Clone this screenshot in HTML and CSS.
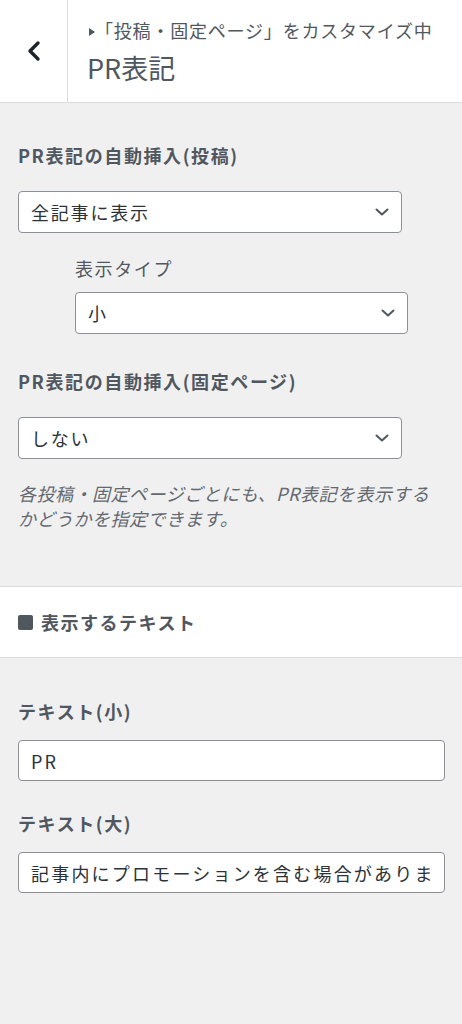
FILE: index.html
```html
<!DOCTYPE html>
<html lang="ja">

<head>
    <meta charset="UTF-8">
    <meta name="viewport" content="width=device-width, initial-scale=1.0">
    <title>PR表記</title>
    <link rel="stylesheet" href="styles.css">
</head>

<body>
    <div class="header">
        <button class="back" aria-label="戻る">
            <svg width="16" height="22" viewBox="0 0 16 22">
                <path d="M12 3 L4 11 L12 19" fill="none" stroke="#1d2327" stroke-width="3.4" stroke-linecap="round" stroke-linejoin="round" />
            </svg>
        </button>
        <div class="heading">
            <div class="crumb"><span class="arrow"></span>「投稿・固定ページ」をカスタマイズ中</div>
            <div class="title">PR表記</div>
        </div>
    </div>

    <div class="panel">
        <div class="control">
            <div class="label">PR表記の自動挿入(投稿)</div>
            <div class="select-wrap">
                <select>
                    <option>全記事に表示</option>
                </select>
                <svg class="chev" width="14" height="8" viewBox="0 0 14 8">
                    <path d="M1.5 1.5 L7 6.5 L12.5 1.5" fill="none" stroke="#50575e" stroke-width="2" stroke-linecap="round" stroke-linejoin="round" />
                </svg>
            </div>
        </div>

        <div class="control sub">
            <div class="label light">表示タイプ</div>
            <div class="select-wrap">
                <select>
                    <option>小</option>
                </select>
                <svg class="chev" width="14" height="8" viewBox="0 0 14 8">
                    <path d="M1.5 1.5 L7 6.5 L12.5 1.5" fill="none" stroke="#50575e" stroke-width="2" stroke-linecap="round" stroke-linejoin="round" />
                </svg>
            </div>
        </div>

        <div class="control second">
            <div class="label">PR表記の自動挿入(固定ページ)</div>
            <div class="select-wrap">
                <select>
                    <option>しない</option>
                </select>
                <svg class="chev" width="14" height="8" viewBox="0 0 14 8">
                    <path d="M1.5 1.5 L7 6.5 L12.5 1.5" fill="none" stroke="#50575e" stroke-width="2" stroke-linecap="round" stroke-linejoin="round" />
                </svg>
            </div>
            <p class="desc">各投稿・固定ページごとにも、PR表記を表示するかどうかを指定できます。</p>
        </div>
    </div>

    <div class="section">
        <span class="square"></span>表示するテキスト
    </div>

    <div class="panel texts">
        <div class="control">
            <div class="label">テキスト(小)</div>
            <div class="field">
                <div class="clip"><input type="text" value="PR"></div>
            </div>
        </div>
        <div class="control">
            <div class="label">テキスト(大)</div>
            <div class="field">
                <div class="clip"><input type="text" value="記事内にプロモーションを含む場合があります。"></div>
            </div>
        </div>
    </div>
</body>

</html>
```

FILE: styles.css
```css
body {
    margin: 0;
    background-color: #f0f0f1;
    font-family: "Noto Sans CJK JP", "Noto Sans", sans-serif;
    color: #2c3338;
}

.header {
    display: flex;
    height: 102px;
    background: #fff;
    border-bottom: 1px solid #dcdcde;
}

.back {
    width: 68px;
    padding: 0;
    border: none;
    border-right: 1px solid #dcdcde;
    background: #fff;
    display: flex;
    align-items: center;
    justify-content: center;
}

.heading {
    padding: 16px 0 0 19px;
}

.crumb {
    font-size: 18px;
    line-height: 28px;
    color: #50575e;
    letter-spacing: 0.8px;
    white-space: nowrap;
}

.arrow {
    display: inline-block;
    width: 0;
    height: 0;
    border-top: 4px solid transparent;
    border-bottom: 4px solid transparent;
    border-left: 6px solid #50575e;
    margin: 0 0 2px 2px;
    vertical-align: middle;
}

.title {
    font-size: 27px;
    line-height: 40px;
    margin-top: 4px;
    color: #50575e;
}

.panel {
    padding: 40px 17px 0 18px;
}

.control {
    margin-bottom: 23px;
}

.label {
    font-size: 18px;
    line-height: 24px;
    font-weight: 700;
    color: #50575e;
    letter-spacing: 1.6px;
    margin-bottom: 24px;
}

.label.light {
    font-weight: 400;
    margin-bottom: 12px;
}

.sub {
    margin-left: 57px;
    width: 333px;
    margin-bottom: 35px;
}

.select-wrap {
    position: relative;
    width: 384px;
}

.sub .select-wrap {
    width: 333px;
}

select,
input {
    display: block;
    box-sizing: border-box;
    width: 100%;
    height: 42px;
    margin: 0;
    padding: 0 40px 0 12px;
    border: 1px solid #8c8f94;
    border-radius: 4px;
    background: #fff;
    font-family: inherit;
    font-size: 18px;
    letter-spacing: 1.8px;
    color: #2c3338;
    appearance: none;
    -webkit-appearance: none;
}

.field {
    box-sizing: border-box;
    height: 41px;
    padding: 0 10px 0 12px;
    border: 1px solid #8c8f94;
    border-radius: 4px;
    background: #fff;
}

.clip {
    overflow: hidden;
}

.field input {
    height: 39px;
    padding: 0;
    border: none;
    border-radius: 0;
    outline: none;
    width: 500px;
    letter-spacing: 2.2px;
}

.chev {
    position: absolute;
    right: 13px;
    top: 17px;
    pointer-events: none;
}

.desc {
    margin: 22px 0 0;
    font-size: 18px;
    line-height: 25px;
    font-style: italic;
    color: #646970;
    letter-spacing: 0.5px;
}

.second {
    margin-bottom: 55px;
}

.section {
    height: 70px;
    background: #fff;
    border-top: 1px solid #dcdcde;
    border-bottom: 1px solid #dcdcde;
    display: flex;
    align-items: center;
    padding-left: 18px;
    font-size: 18px;
    font-weight: 700;
    color: #50575e;
    letter-spacing: 1.5px;
}

.square {
    width: 15px;
    height: 15px;
    border-radius: 2px;
    background: #50575e;
    margin-right: 8px;
}

.texts {
    padding-top: 41px;
}

.texts .label {
    margin-bottom: 17px;
}

.texts .control {
    margin-bottom: 30px;
}
```
